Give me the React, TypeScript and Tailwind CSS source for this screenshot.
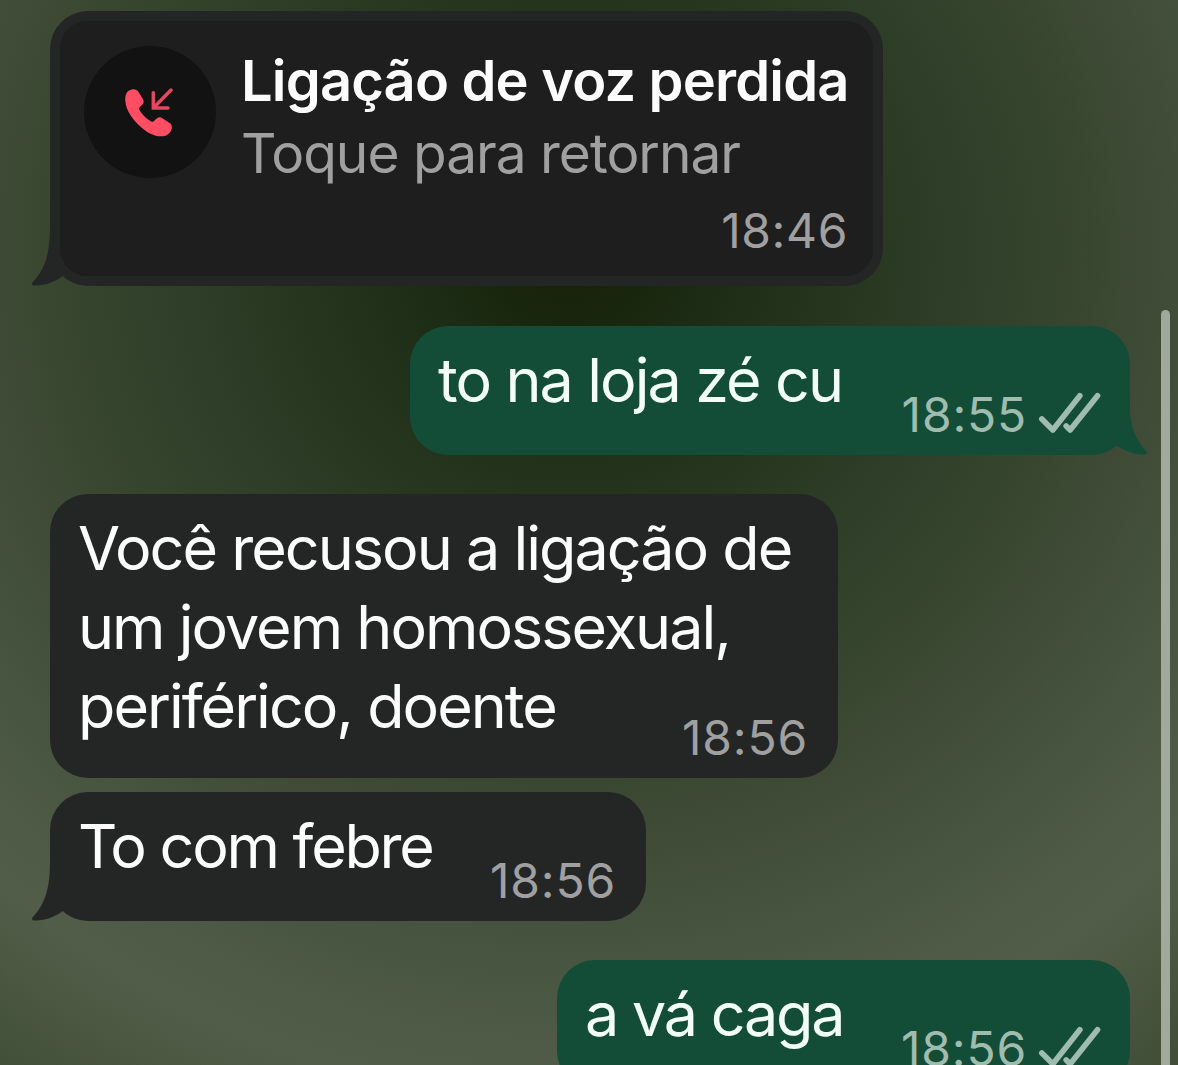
type TailProps = {
  side: "left" | "right";
};

function Tail({ side }: TailProps) {
  return (
    <svg
      viewBox="0 0 44 60"
      className={`absolute bottom-0 h-[60px] w-[44px] ${
        side === "left" ? "-left-[20px] text-[#242626]" : "-right-[19px] -scale-x-100 text-[#144d37]"
      }`}
      fill="currentColor"
    >
      <path d="M20 0C20 26 16 42 2.5 56.5C1.5 58 2 59.5 4 59.5C15 60 24 56 31.5 51L44 40V0Z" />
    </svg>
  );
}

function MissedCallIcon() {
  return (
    <svg viewBox="310 260 156 156" className="mt-px mr-[2px] h-[52px] w-[52px]" fill="none">
      <path
        d="M317 302C315 283 322 271 334 268C343 265 350 267 355 273L370 297C374 304 372 309 367 314L360 320C357 324 358 327 361 332C370 345 383 358 396 364C400 365 403 363 406 359L412 354C417 350 423 350 428 354L450 368C456 372 458 378 456 385C453 398 442 407 427 408C410 409 388 401 366 382C340 359 319 332 317 302Z"
        fill="#ff4d64"
      />
      <path d="M454 269L402 322M401 277V323H445" stroke="#e04a5e" strokeWidth="10.5" strokeLinecap="round" />
    </svg>
  );
}

function DoubleCheck() {
  return (
    <svg viewBox="534 246 188 126" className="h-[42px] w-[63px]" fill="none">
      <path
        d="M545 327L578 360L659 257M618 348L630 360L712 257"
        stroke="#9fbcae"
        strokeWidth="17"
        strokeLinecap="round"
        strokeLinejoin="round"
      />
    </svg>
  );
}

type MessageProps = {
  lines: string[];
  time: string;
  sent?: boolean;
  tail?: boolean;
  className: string;
};

function Message({ lines, time, sent = false, tail = false, className }: MessageProps) {
  return (
    <div
      className={`relative flex shrink-0 items-stretch justify-between rounded-[38px] pr-[30px] pl-[28px] ${
        sent ? "self-end bg-[#144d37]" : "self-start bg-[#242626]"
      } ${className}`}
    >
      {tail ? <Tail side={sent ? "right" : "left"} /> : null}
      <div
        className={`relative pt-[15px] text-[61px] leading-[79px] whitespace-nowrap ${
          sent ? "text-[#f3fff9]" : "text-[#fcfcfc]"
        }`}
      >
        {lines.map((line) => (
          <div key={line}>{line}</div>
        ))}
      </div>
      <div
        className={`absolute bottom-[16px] flex items-end gap-[11px] text-[48px] leading-[48px] tracking-[0.8px] ${
          sent ? "right-[29px] text-[#9fbcae]" : "right-[30px] text-[#a0a0a0]"
        }`}
      >
        <span>{time}</span>
        {sent ? (
          <span className="pb-[5px]">
            <DoubleCheck />
          </span>
        ) : null}
      </div>
    </div>
  );
}

function MissedCall() {
  return (
    <div className="relative h-[275px] w-[833px] shrink-0 self-start rounded-[38px] bg-[#242626] p-[10px]">
      <Tail side="left" />
      <div className="relative flex h-full flex-col rounded-[27px] bg-[#1e1e1e] pr-[25px] pl-[24px]">
        <div className="flex pt-[24px]">
          <div className="mt-px flex h-[132px] w-[132px] shrink-0 items-center justify-center rounded-full bg-[#121212]">
            <MissedCallIcon />
          </div>
          <div className="pl-[25px] whitespace-nowrap">
            <div className="text-[56px] leading-[72px] font-semibold tracking-[-0.82px] text-[#fcfcfc]">
              Ligação de voz perdida
            </div>
            <div className="text-[55px] leading-[72px] tracking-[-1px] text-[#a0a0a0]">Toque para retornar</div>
          </div>
        </div>
        <div className="mt-auto self-end pb-[21px] text-[48px] leading-[48px] tracking-[0.6px] text-[#a0a0a0]">
          18:46
        </div>
      </div>
    </div>
  );
}

export default function App() {
  return (
    <div className="flex h-[1065px] w-[1178px] overflow-hidden bg-[radial-gradient(circle_at_570px_250px,#162009_0px,#1b2a12_120px,#25341c_250px,#2d3d27_370px,#35442d_480px,#3f4b36_590px,#465440_700px,#4f5b46_800px,#515d48_850px,#46533c_960px,#3c4933_1060px)] font-['Inter',sans-serif]">
      <div className="flex w-[1130px] flex-col pt-[11px] pl-[50px]">
        <MissedCall />
        <Message
          className="mt-[40px] h-[129px] w-[720px] tracking-[-1.9px]"
          lines={["to na loja zé cu"]}
          time="18:55"
          sent
          tail
        />
        <Message
          className="mt-[39px] h-[284px] w-[788px] tracking-[-1.97px]"
          lines={["Você recusou a ligação de", "um jovem homossexual,", "periférico, doente"]}
          time="18:56"
        />
        <Message
          className="mt-[14px] h-[129px] w-[596px] tracking-[-2.25px]"
          lines={["To com febre"]}
          time="18:56"
          tail
        />
        <Message className="mt-[39px] h-[129px] w-[573px] tracking-[-2.2px]" lines={["a vá caga"]} time="18:56" sent />
      </div>
      <div className="mt-[310px] ml-[31px] h-[800px] w-[9px] shrink-0 rounded-full bg-[#a1a89d]" />
    </div>
  );
}
